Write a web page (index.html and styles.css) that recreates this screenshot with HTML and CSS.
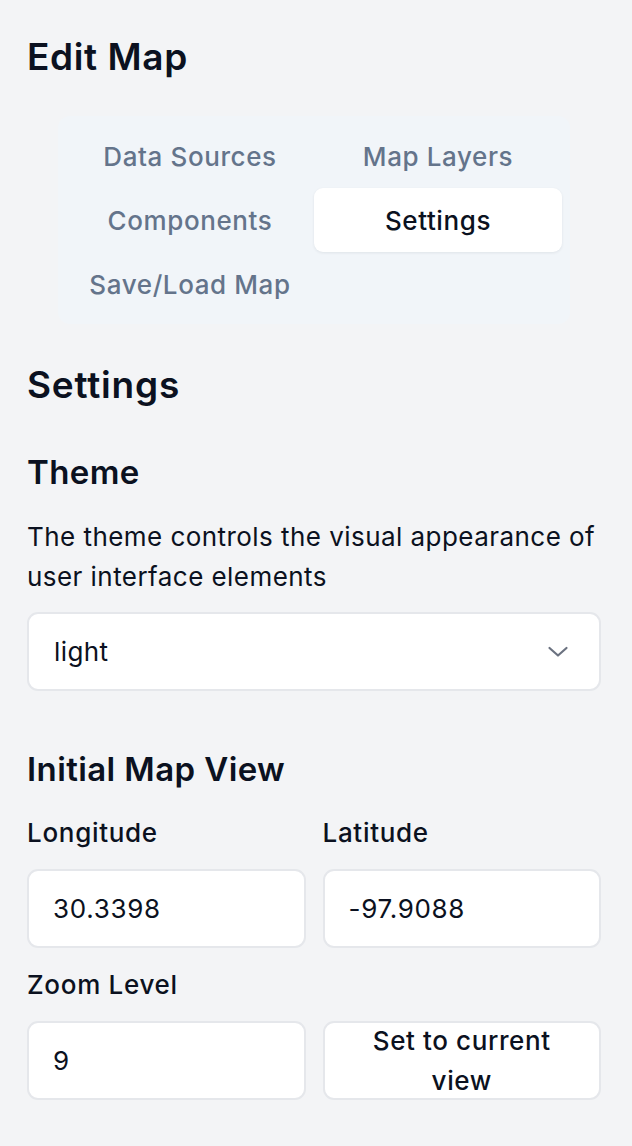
FILE: index.html
```html
<!DOCTYPE html>
<html>
<head>
<meta charset="utf-8">
<link rel="stylesheet" href="styles.css">
</head>
<body>
<div class="page">
  <h1 class="title">Edit Map</h1>
  <div class="tabs-wrap">
    <div class="tabs">
      <div class="tab">Data Sources</div>
      <div class="tab">Map Layers</div>
      <div class="tab">Components</div>
      <div class="tab active">Settings</div>
      <div class="tab">Save/Load Map</div>
    </div>
  </div>
  <h2 class="section-title">Settings</h2>
  <h3 class="sub-title">Theme</h3>
  <p class="desc">The theme controls the visual appearance of user interface elements</p>
  <div class="select">
    <span class="select-value">light</span>
    <svg class="chevron" width="22" height="12" viewBox="0 0 22 12"><path d="M2.5 2 L11 9.5 L19.5 2" fill="none" stroke="#6b7280" stroke-width="2.2" stroke-linecap="round" stroke-linejoin="round"/></svg>
  </div>
  <h3 class="sub-title view-title">Initial Map View</h3>
  <div class="grid">
    <div class="field">
      <label class="label">Longitude</label>
      <div class="input">30.3398</div>
    </div>
    <div class="field">
      <label class="label">Latitude</label>
      <div class="input">-97.9088</div>
    </div>
    <div class="field">
      <label class="label">Zoom Level</label>
      <div class="input">9</div>
    </div>
    <div class="field field-btn">
      <div class="button">Set to current view</div>
    </div>
  </div>
</div>
</body>
</html>
```
FILE: styles.css
```css
* { box-sizing: border-box; }
html, body { margin: 0; padding: 0; }
body {
  background: #f3f4f6;
  font-family: Inter, "Liberation Sans", sans-serif;
  color: #0b1120;
  width: 632px;
}
.page {
  padding: 33px 31px 47px 27px;
}
.title {
  margin: 0;
  font-size: 37px;
  font-weight: 600;
  line-height: 48px;
  letter-spacing: 0.6px;
}
.tabs-wrap {
  display: flex;
  justify-content: center;
  margin-top: 35px;
}
.tabs {
  width: 512px;
  background: #f1f5f9;
  border-radius: 12px;
  padding: 8px;
  display: grid;
  grid-template-columns: 248px 248px;
  grid-auto-rows: 64px;
}
.tab {
  display: flex;
  align-items: center;
  justify-content: center;
  font-size: 26px;
  font-weight: 500;
  letter-spacing: 0.6px;
  color: #64748b;
  border-radius: 9px;
}
.tab.active {
  background: #fff;
  color: #0b1120;
  box-shadow: 0 1px 3px rgba(15, 23, 42, 0.08);
}
.section-title {
  margin: 37px 0 0 0;
  font-size: 37px;
  font-weight: 600;
  line-height: 48px;
  letter-spacing: 0.8px;
}
.sub-title {
  margin: 41px 0 0 0;
  font-size: 33px;
  font-weight: 600;
  line-height: 44px;
  letter-spacing: 0.4px;
}
.desc {
  margin: 23px 0 0 0;
  font-size: 26px;
  line-height: 40px;
  font-weight: 400;
  letter-spacing: 0.45px;
}
.select {
  margin-top: 15px;
  height: 79px;
  background: #fff;
  border: 2px solid #e5e7eb;
  border-radius: 11px;
  display: flex;
  align-items: center;
  justify-content: space-between;
  padding: 0 30px 0 25px;
}
.select-value {
  font-size: 26px;
  letter-spacing: 0.4px;
}
.view-title {
  margin-top: 56px;
}
.grid {
  margin-top: 22px;
  display: grid;
  grid-template-columns: 1fr 1fr;
  column-gap: 17px;
  row-gap: 17px;
}
.field {
  display: flex;
  flex-direction: column;
}
.field-btn {
  justify-content: flex-end;
}
.label {
  font-size: 26px;
  font-weight: 500;
  line-height: 40px;
  letter-spacing: 0.7px;
  margin-bottom: 16px;
}
.input {
  height: 79px;
  background: #fff;
  border: 2px solid #e5e7eb;
  border-radius: 11px;
  display: flex;
  align-items: center;
  padding: 0 24px;
  font-size: 26px;
  letter-spacing: 0.7px;
}
.button {
  height: 79px;
  background: #fff;
  border: 2px solid #e5e7eb;
  border-radius: 11px;
  display: flex;
  align-items: center;
  justify-content: center;
  text-align: center;
  padding: 0 40px;
  font-size: 26px;
  font-weight: 500;
  line-height: 40px;
  letter-spacing: 0.6px;
}
```
